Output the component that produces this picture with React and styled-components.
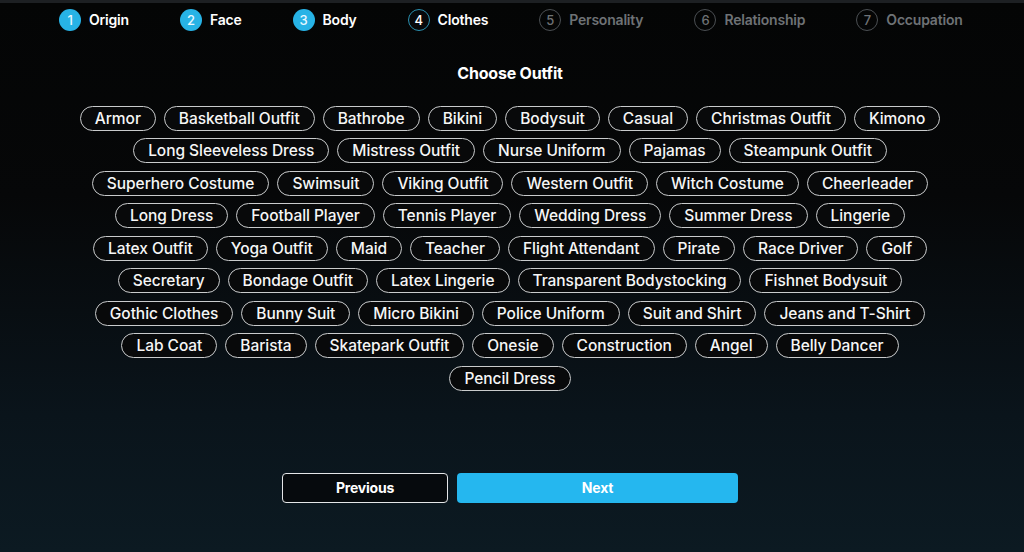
import styled, { createGlobalStyle } from "styled-components";

const GlobalStyle = createGlobalStyle`
  html, body {
    margin: 0;
    padding: 0;
    height: 100%;
  }
  body {
    background: #050607;
    font-family: Inter, "Noto Sans", sans-serif;
    color: #f2f2f2;
  }
`;

const Page = styled.div`
  width: 1024px;
  height: 552px;
  box-sizing: border-box;
  padding-right: 4px;
  display: flex;
  flex-direction: column;
  align-items: center;
  background: linear-gradient(180deg, #040505 0%, #060708 35%, #0a141b 75%, #0c1a22 100%);
  border-top: 3px solid #1d2023;
  overflow: hidden;
`;

const Stepper = styled.div`
  align-self: stretch;
  display: flex;
  align-items: center;
  gap: 51px;
  height: 33px;
  padding-left: 59px;
`;

const Step = styled.div`
  display: flex;
  align-items: center;
  gap: 8px;
  font-size: 14px;
  font-weight: 600;
  letter-spacing: -0.2px;
  color: ${(p) => (p.$state === "todo" ? "#6e7275" : "#ffffff")};
`;

const Dot = styled.span`
  width: 22px;
  height: 22px;
  box-sizing: border-box;
  border-radius: 50%;
  display: flex;
  align-items: center;
  justify-content: center;
  font-size: 13px;
  font-weight: 500;
  ${(p) =>
    p.$state === "done"
      ? "background: #27b3e6; color: #eaf8ff;"
      : p.$state === "current"
      ? "background: #07090b; border: 1.5px solid #2a8fae; color: #ffffff;"
      : "background: transparent; border: 1.5px solid #4b4f53; color: #6e7275;"}
`;

const Title = styled.h2`
  margin: 27px 0 0;
  font-size: 16px;
  font-weight: 700;
  letter-spacing: -0.2px;
  color: #ffffff;
`;

const Chips = styled.div`
  margin-top: 22.5px;
  display: flex;
  flex-direction: column;
  align-items: center;
  gap: 7.5px;
`;

const ChipRow = styled.div`
  display: flex;
  justify-content: center;
  gap: 8px;
`;

const Chip = styled.button`
  height: 25px;
  box-sizing: border-box;
  padding: 0 14px;
  border: 1.5px solid #c9cbcc;
  border-radius: 999px;
  background: #08090a;
  color: #f6f6f6;
  font-family: Inter, "Noto Sans", sans-serif;
  font-size: 15.5px;
  font-weight: 500;
  letter-spacing: -0.05px;
  white-space: nowrap;
  cursor: pointer;
`;

const Actions = styled.div`
  margin-top: 82px;
  display: flex;
  gap: 9px;
`;

const NavButton = styled.button`
  height: 30px;
  width: ${(p) => (p.$primary ? "281px" : "166px")};
  box-sizing: border-box;
  border-radius: 4px;
  border: ${(p) => (p.$primary ? "none" : "1px solid #e4e6e8")};
  background: ${(p) => (p.$primary ? "#25b7ef" : "#060a0d")};
  color: #ffffff;
  font-family: Inter, "Noto Sans", sans-serif;
  font-size: 14px;
  font-weight: 700;
  letter-spacing: -0.2px;
  cursor: pointer;
`;

const steps = [
  ["Origin", "done"],
  ["Face", "done"],
  ["Body", "done"],
  ["Clothes", "current"],
  ["Personality", "todo"],
  ["Relationship", "todo"],
  ["Occupation", "todo"],
];

const rows = [
  ["Armor", "Basketball Outfit", "Bathrobe", "Bikini", "Bodysuit", "Casual", "Christmas Outfit", "Kimono"],
  ["Long Sleeveless Dress", "Mistress Outfit", "Nurse Uniform", "Pajamas", "Steampunk Outfit"],
  ["Superhero Costume", "Swimsuit", "Viking Outfit", "Western Outfit", "Witch Costume", "Cheerleader"],
  ["Long Dress", "Football Player", "Tennis Player", "Wedding Dress", "Summer Dress", "Lingerie"],
  ["Latex Outfit", "Yoga Outfit", "Maid", "Teacher", "Flight Attendant", "Pirate", "Race Driver", "Golf"],
  ["Secretary", "Bondage Outfit", "Latex Lingerie", "Transparent Bodystocking", "Fishnet Bodysuit"],
  ["Gothic Clothes", "Bunny Suit", "Micro Bikini", "Police Uniform", "Suit and Shirt", "Jeans and T-Shirt"],
  ["Lab Coat", "Barista", "Skatepark Outfit", "Onesie", "Construction", "Angel", "Belly Dancer"],
  ["Pencil Dress"],
];

const App = () => {
  return (
    <Page>
      <GlobalStyle />
      <Stepper>
        {steps.map(([label, state], i) => (
          <Step key={label} $state={state}>
            <Dot $state={state}>{i + 1}</Dot>
            {label}
          </Step>
        ))}
      </Stepper>
      <Title>Choose Outfit</Title>
      <Chips>
        {rows.map((row, i) => (
          <ChipRow key={i}>
            {row.map((item) => (
              <Chip key={item}>{item}</Chip>
            ))}
          </ChipRow>
        ))}
      </Chips>
      <Actions>
        <NavButton>Previous</NavButton>
        <NavButton $primary>Next</NavButton>
      </Actions>
    </Page>
  );
};

export default App;
